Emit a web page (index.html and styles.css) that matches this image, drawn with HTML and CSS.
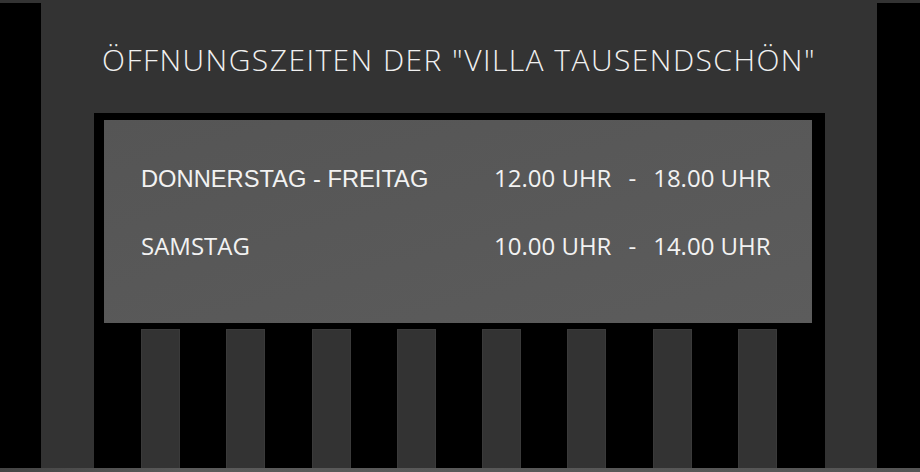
FILE: index.html
```html
<!DOCTYPE html>
<html lang="de">

<head>
    <meta charset="UTF-8">
    <meta name="viewport" content="width=device-width, initial-scale=1.0">
    <title>Öffnungszeiten</title>
    <link rel="stylesheet" href="styles.css">
</head>

<body>
    <div class="frame">
        <div class="page">
            <h1>ÖFFNUNGSZEITEN DER "VILLA TAUSENDSCHÖN"</h1>

            <div class="board">
                <div class="hours">
                    <div class="row">
                        <span class="day day-arial">DONNERSTAG - FREITAG</span>
                        <span class="time">
                            <span>12.00 UHR</span>
                            <span class="dash">-</span>
                            <span>18.00 UHR</span>
                        </span>
                    </div>
                    <div class="row">
                        <span class="day">SAMSTAG</span>
                        <span class="time">
                            <span>10.00 UHR</span>
                            <span class="dash">-</span>
                            <span>14.00 UHR</span>
                        </span>
                    </div>
                </div>

                <!-- Fence posts below the board -->
                <div class="posts">
                    <div class="post"></div>
                    <div class="post"></div>
                    <div class="post"></div>
                    <div class="post"></div>
                    <div class="post"></div>
                    <div class="post"></div>
                    <div class="post"></div>
                    <div class="post"></div>
                </div>
            </div>
        </div>
    </div>
</body>

</html>
```

FILE: styles.css
```css
/* General page layout */
body {
    margin: 0;
    background-color: #333;
    font-family: 'Open Sans', 'Liberation Sans', sans-serif;
    color: #f2f2f2;
}

.frame {
    height: 465px;
    margin-top: 3px;
    background-color: #000;
    border-bottom: 4px solid #555;
    border-image: linear-gradient(to right, #444, #5a5a5a 20%, #555) 1;
    border-top: 0;
    border-left: 0;
    border-right: 0;
    display: flex;
}

.page {
    width: 836px;
    margin-left: 41px;
    margin-top: -3px;
    background-color: #333;
    display: flex;
    flex-direction: column;
}

h1 {
    margin: 42px 0 0;
    height: 71px;
    text-align: center;
    font-weight: 300;
    font-size: 30px;
    letter-spacing: 1.45px;
    color: #f0f0f0;
    line-height: 1.2;
}

/* Black board with the opening hours */
.board {
    flex: 1;
    width: 731px;
    margin-left: 53px;
    background-color: #000;
    padding: 7px 0 0 10px;
    box-sizing: border-box;
    display: flex;
    flex-direction: column;
}

.hours {
    width: 708px;
    height: 203px;
    background: linear-gradient(to bottom right, #555, #5c5c5c);
    box-sizing: border-box;
    padding: 41px 0 0 37px;
    display: flex;
    flex-direction: column;
    gap: 37px;
}

.row {
    display: flex;
    align-items: baseline;
    height: 31px;
}

.day {
    width: 353px;
    font-size: 24px;
}

.day-arial {
    font-family: 'Liberation Sans', Arial, sans-serif;
    font-size: 23.7px;
}

.time {
    display: flex;
    font-size: 24px;
}

.dash {
    margin: 0 17px;
}

/* Posts under the board */
.posts {
    flex: 1;
    margin: 6px 0 0 -10px;
    padding: 0 48px 0 47px;
    display: flex;
    justify-content: space-between;
}

.post {
    width: 39px;
    background-color: #333;
    border: 1px solid #3a3a3a;
    border-bottom: 0;
    box-sizing: border-box;
}
```
